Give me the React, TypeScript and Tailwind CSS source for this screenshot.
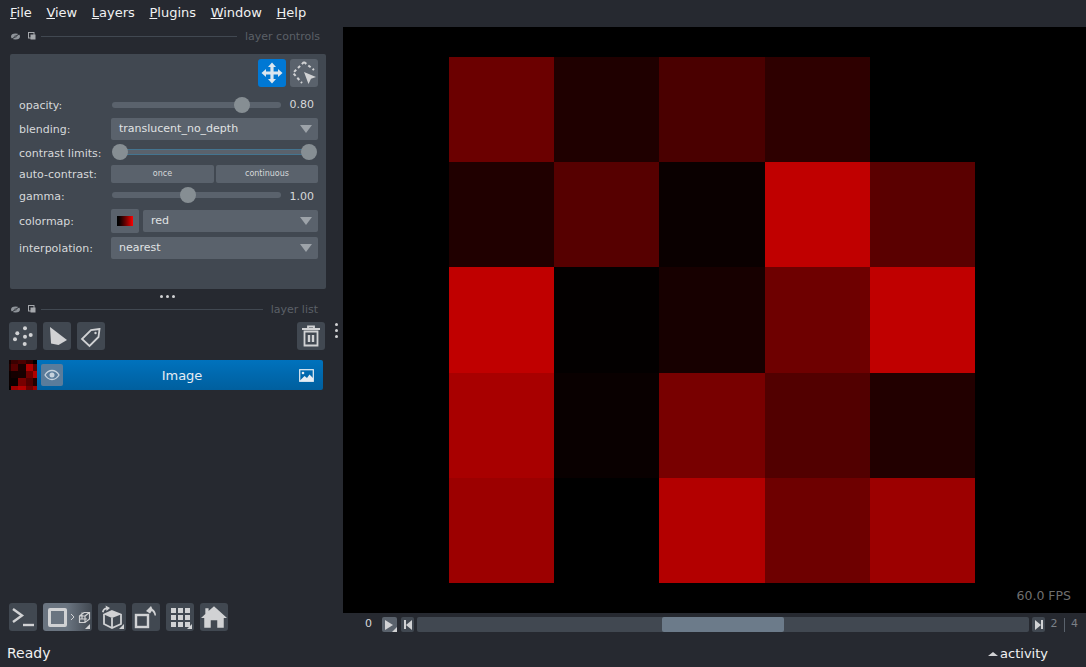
import type { ReactNode } from "react"

const menus = [
  ["F", "ile"],
  ["V", "iew"],
  ["L", "ayers"],
  ["P", "lugins"],
  ["W", "indow"],
  ["H", "elp"],
]

const cells = [
  "#6b0000", "#1f0000", "#4a0000", "#2e0000", "#000000",
  "#200000", "#560000", "#0a0000", "#c00000", "#5a0000",
  "#c00000", "#030000", "#170000", "#6e0000", "#c00000",
  "#a80000", "#090000", "#780000", "#520000", "#220000",
  "#9c0000", "#000000", "#b30000", "#6e0000", "#9c0000",
]

const thumb = [
  "#100000", "#3a0000", "#4a0000", "#2e0000", "#000000",
  "#200000", "#560000", "#1a0000", "#b00000", "#5a0000",
  "#0a0000", "#140000", "#170000", "#6e0000", "#b00000",
  "#0a0000", "#090000", "#780000", "#520000", "#220000",
  "#000000", "#9c0000", "#b30000", "#6e0000", "#9c0000",
]

function Corner() {
  return <span className="absolute right-[2px] bottom-[2px] h-0 w-0 border-b-[5px] border-l-[5px] border-b-[#d1d2d4] border-l-transparent" />
}

function IconBtn({ children, bg = "bg-[#414851]", className = "" }: { children: ReactNode; bg?: string; className?: string }) {
  return (
    <div className={`relative flex h-7 w-7 shrink-0 items-center justify-center rounded-[3px] ${bg} ${className}`}>
      {children}
    </div>
  )
}

function DockHeader({ title, right }: { title: string; right: string }) {
  return (
    <div className={`flex h-[18px] items-center pl-[11px] ${right}`}>
      <svg width="9" height="7" viewBox="0 0 9 7" className="mr-[8px] shrink-0">
        <ellipse cx="4.5" cy="3.5" rx="4.5" ry="3" fill="#8f949a" />
        <path d="M1 6 8 1" stroke="#262930" strokeWidth="1" />
        <circle cx="4.5" cy="3.5" r="1.2" fill="#55595f" />
      </svg>
      <svg width="8" height="8" viewBox="0 0 8 8" className="mr-[5px] shrink-0">
        <rect x="0.5" y="0.5" width="5.5" height="5.5" fill="none" stroke="#a5a8ac" />
        <rect x="2.5" y="2.5" width="5" height="5" fill="#a5a8ac" />
      </svg>
      <div className="h-px flex-1 bg-[#414851]" />
      <span className="ml-[8px] text-[11px] leading-none text-[#5b6067]">{title}</span>
    </div>
  )
}

function Slider({ pos, value, valueClass }: { pos: number; value: string; valueClass: string }) {
  return (
    <div className="flex h-full flex-1 items-center">
      <div className="relative ml-[1px] h-[6px] w-[169px] rounded-[3px] bg-[#5a626c]">
        <div className="absolute top-[-5px] h-4 w-4 rounded-full bg-[#868e93]" style={{ left: pos - 8 }} />
      </div>
      <span className={`ml-auto pr-[4px] text-[11px] text-[#d6d8da] ${valueClass}`}>{value}</span>
    </div>
  )
}

function Select({ text, className = "" }: { text: string; className?: string }) {
  return (
    <div className={`flex items-center justify-between rounded-[2px] bg-[#5a626c] pl-2 pr-[6px] text-[11px] text-[#e0e2e4] ${className}`}>
      <span>{text}</span>
      <span className="h-0 w-0 border-x-[6.5px] border-t-[8px] border-x-transparent border-t-[#9da3a9]" />
    </div>
  )
}

function Row({ label, className, labelClass, children }: { label: string; className: string; labelClass: string; children: ReactNode }) {
  return (
    <div className={`flex items-center ${className}`}>
      <span className={`w-[92px] shrink-0 text-[11px] text-[#d6d8da] ${labelClass}`}>{label}</span>
      <div className="flex h-full min-w-0 flex-1 items-center">{children}</div>
    </div>
  )
}

function LayerControls() {
  return (
    <div className="ml-[10px] mt-[9px] h-[235px] w-[316px] rounded-[2px] bg-[#414851] pl-[9px] pr-[8px] pt-[5px]">
      <div className="flex justify-end gap-1">
        <IconBtn bg="bg-[#0078d4]">
          <svg width="24" height="24" viewBox="0 0 24 24" fill="#dbe6ef">
            <path d="M12 1.5 16 6h-2.400v4.400H18V8l4.500 4-4.500 4v-2.400h-4.400v4.400H16l-4 4.500L8 18h2.400v-4.400H6V16l-4.500-4L6 8v2.400h4.400V6H8z" />
          </svg>
        </IconBtn>
        <IconBtn bg="bg-[#5a626c]">
          <svg width="28" height="28" viewBox="0 0 28 28" fill="none">
            <path d="M14 3 24 11M14 3 3 14 12 24" stroke="#d1d2d4" strokeWidth="2" strokeDasharray="3 2.500" />
            <path d="M14 13 26 18l-5 1.800L18.500 25z" fill="#d1d2d4" />
          </svg>
        </IconBtn>
      </div>
      <Row label="opacity:" labelClass="pt-[4px]" className="mt-[4px] h-[27px]">
        <Slider pos={130} value="0.80" valueClass="pt-[2px]" />
      </Row>
      <Row label="blending:" labelClass="pt-[2px]" className="h-[22px]">
        <Select text="translucent_no_depth" className="h-[22px] w-full" />
      </Row>
      <Row label="contrast limits:" labelClass="pt-[5px]" className="h-[24px]">
        <div className="relative ml-[9px] h-[6px] w-[189px] border-y border-[#44748f] bg-[#5a626c]">
          <div className="absolute left-[-8px] top-[-6px] h-4 w-4 rounded-full bg-[#868e93]" />
          <div className="absolute right-[-8px] top-[-6px] h-4 w-4 rounded-full bg-[#868e93]" />
        </div>
      </Row>
      <Row label="auto-contrast:" labelClass="pt-[2px]" className="mt-px h-[18px]">
        <div className="flex h-full w-full gap-[2px] text-center text-[8px] leading-[18px] text-[#d6d8da]">
          <div className="w-[103px] rounded-[2px] bg-[#5a626c]">once</div>
          <div className="flex-1 rounded-[2px] bg-[#5a626c]">continuous</div>
        </div>
      </Row>
      <Row label="gamma:" labelClass="pt-[5px]" className="mt-[1px] h-[22px]">
        <Slider pos={76} value="1.00" valueClass="pt-[4px]" />
      </Row>
      <Row label="colormap:" labelClass="pt-[3px]" className="mt-[3px] h-[24px]">
        <div className="flex h-[24px] w-[28px] shrink-0 items-center justify-center rounded-[2px] bg-[#5a626c]">
          <div className="h-[10px] w-[16px] bg-gradient-to-r from-black to-[#ff0000]" />
        </div>
        <Select text="red" className="ml-1 h-[22px] flex-1" />
      </Row>
      <Row label="interpolation:" labelClass="pt-[3px]" className="mt-[4px] h-[22px]">
        <Select text="nearest" className="h-[22px] w-full" />
      </Row>
    </div>
  )
}

function LayerList() {
  return (
    <>
      <div className="flex h-[11px] items-center justify-center gap-[3px] pr-[9px] pt-[3px]">
        <span className="h-[3px] w-[3px] rounded-full bg-[#d1d2d4]" />
        <span className="h-[3px] w-[3px] rounded-full bg-[#d1d2d4]" />
        <span className="h-[3px] w-[3px] rounded-full bg-[#d1d2d4]" />
      </div>
      <DockHeader title="layer list" right="pr-[25px]" />
      <div className="mt-[4px] flex items-center pl-[9px] pr-[18px]">
        <div className="flex gap-[6px]">
          <IconBtn>
            <svg width="28" height="28" viewBox="0 0 28 28" fill="#d1d2d4">
              <circle cx="8.300" cy="11.300" r="2" />
              <circle cx="16" cy="6.300" r="2" />
              <circle cx="16" cy="14.700" r="2" />
              <circle cx="21.700" cy="13" r="2" />
              <circle cx="6" cy="17.300" r="2" />
              <circle cx="15.700" cy="22" r="2" />
            </svg>
          </IconBtn>
          <IconBtn>
            <svg width="28" height="28" viewBox="0 0 28 28" fill="#d1d2d4">
              <path d="M7 5 24 18 15.500 23 8 21.500z" />
            </svg>
          </IconBtn>
          <IconBtn>
            <svg width="28" height="28" viewBox="0 0 28 28" fill="none" stroke="#d1d2d4" strokeWidth="1.800">
              <path d="M22.500 7 14 8 5 17l7.500 7 9-9z" />
              <circle cx="18.500" cy="11" r="1.200" fill="#d1d2d4" stroke="none" />
            </svg>
          </IconBtn>
        </div>
        <IconBtn className="ml-auto">
          <svg width="20" height="22" viewBox="0 0 20 22" fill="none" stroke="#d1d2d4" strokeWidth="1.800">
            <path d="M1 4h18" strokeWidth="2" />
            <path d="M7 3V1.500h6V3" />
            <path d="M3.500 6.500v14h13v-14z" />
            <path d="M8 10v7M12 10v7" strokeWidth="2.400" />
          </svg>
          <span className="absolute right-[-13px] top-[1px] flex flex-col gap-[3px]">
            <span className="h-[3px] w-[3px] rounded-full bg-[#d1d2d4]" />
            <span className="h-[3px] w-[3px] rounded-full bg-[#d1d2d4]" />
            <span className="h-[3px] w-[3px] rounded-full bg-[#d1d2d4]" />
          </span>
        </IconBtn>
      </div>
      <div className="ml-[9px] mt-[10px] flex h-[30px] w-[314px] items-center rounded-[2px] bg-gradient-to-b from-[#0072bd] to-[#005f9e]">
        <div className="grid h-[30px] w-[28px] shrink-0 grid-cols-[2px_7px_8px_7px_4px] grid-rows-[4px_7px_7px_8px_4px]">
          {thumb.map((c, i) => (
            <div key={i} style={{ backgroundColor: c }} />
          ))}
        </div>
        <div className="ml-[4px] flex h-[22px] w-[22px] shrink-0 items-center justify-center rounded-[2px] bg-[#5a7c9b]">
          <svg width="16" height="12" viewBox="0 0 16 12" fill="none">
            <path d="M1 6c3.500-6 10.500-6 14 0-3.500 6-10.500 6-14 0z" stroke="#c7d3de" strokeWidth="1.300" />
            <circle cx="8" cy="6" r="2.500" fill="#c7d3de" />
          </svg>
        </div>
        <span className="flex-1 pl-[2px] pt-[2px] text-center text-[13px] text-[#e6edf3]">Image</span>
        <svg width="15" height="13" viewBox="0 0 15 13" className="mr-[9px] shrink-0" fill="none">
          <rect x="0.700" y="0.700" width="13.600" height="11.600" stroke="#e6edf3" strokeWidth="1.200" />
          <circle cx="4" cy="4" r="1.300" fill="#e6edf3" />
          <path d="M1 11.500 5.500 7 8 9l2.500-3.500L14 9v3H1z" fill="#e6edf3" />
        </svg>
      </div>
    </>
  )
}

function BottomButtons() {
  return (
    <div className="mt-auto flex gap-[6px] pb-px pl-[9px]">
      <IconBtn>
        <svg width="24" height="22" viewBox="0 0 24 22" fill="none" stroke="#d1d2d4" strokeWidth="2.400">
          <path d="M2 3l9 6.500L2 16" />
          <path d="M12 19h11" />
        </svg>
      </IconBtn>
      <div className="relative flex h-7 w-[49px] shrink-0 items-center rounded-[3px] bg-gradient-to-r from-[#6a7480] from-50% to-[#414851] pl-[5px]">
        <div className="h-[19px] w-[19px] rounded-[2px] border-[3px] border-[#d1d2d4] bg-[#6a7480]" />
        <svg width="6" height="8" viewBox="0 0 6 8" className="ml-[3px]" fill="none" stroke="#d1d2d4" strokeWidth="1">
          <path d="M1 1l3 3-3 3" />
        </svg>
        <svg width="13" height="13" viewBox="0 0 13 13" className="ml-[2px]" fill="none" stroke="#d1d2d4" strokeWidth="1.200">
          <path d="M1.500 5 6 1.500h5.500V8L7 11.500H1.500zM1.500 5H7v6.500M7 5l4.500-3.500M4 1.500v7M1.500 8H9" />
        </svg>
        <Corner />
      </div>
      <IconBtn>
        <svg width="26" height="26" viewBox="0 0 26 26" fill="none">
          <path d="M13 7 22 10.500V20L13 24 5 20V10.500z" stroke="#d1d2d4" strokeWidth="1.800" />
          <path d="M5 10.500 13 14l9-3.500L13 7z" fill="#d1d2d4" />
          <path d="M13 14v10" stroke="#d1d2d4" strokeWidth="1.800" />
          <path d="M3 8c.5-2.500 2-4 4-4.500L6.500 1.500 11 4 7.500 7 7.300 5.200C5.800 5.600 5 6.500 4.700 8.500z" fill="#d1d2d4" />
        </svg>
        <Corner />
      </IconBtn>
      <IconBtn>
        <svg width="26" height="26" viewBox="0 0 26 26" fill="none">
          <rect x="3" y="11" width="12" height="12" stroke="#d1d2d4" strokeWidth="2.400" />
          <path d="M13 7 18 2l1.500 3c2 1.200 3.500 3.500 3.500 6.500h-1.500c-.3-2-1.200-3.500-2.700-4.500L17 9.500z" fill="#d1d2d4" />
        </svg>
      </IconBtn>
      <IconBtn>
        <div className="grid grid-cols-3 gap-[2px]">
          {[0, 1, 2, 3, 4, 5, 6, 7, 8].map((i) => (
            <div key={i} className="h-[5px] w-[5px] bg-[#d1d2d4]" />
          ))}
        </div>
        <Corner />
      </IconBtn>
      <IconBtn>
        <svg width="26" height="24" viewBox="0 0 24 22" fill="#d1d2d4">
          <path d="M12 1 24 12h-3v9h-6v-7H9v7H3v-9H0l4-3.700V3h3v2.500z" />
        </svg>
      </IconBtn>
    </div>
  )
}

function DimsBar() {
  return (
    <div className="flex h-[19px] items-center pt-[4px] text-[11px]">
      <span className="ml-[22px] w-[17px] text-[#d6d8da]">0</span>
      <div className="relative flex h-[15px] w-[15px] items-center justify-center rounded-[2px] bg-[#5a626c]">
        <span className="ml-[-1px] h-0 w-0 border-y-[5px] border-l-[8px] border-y-transparent border-l-[#d1d2d4]" />
        <span className="absolute bottom-0 right-0 h-0 w-0 border-b-[5px] border-l-[5px] border-b-[#d1d2d4] border-l-transparent" />
      </div>
      <div className="ml-[4px] flex h-[15px] w-[13px] items-center justify-center rounded-[2px] bg-[#414851]">
        <span className="h-[9px] w-[2px] bg-[#d1d2d4]" />
        <span className="h-0 w-0 border-y-[5px] border-r-[6px] border-y-transparent border-r-[#d1d2d4]" />
      </div>
      <div className="ml-[3px] flex h-[15px] w-[612px] rounded-[2px] bg-[#414851] pl-[245px]">
        <div className="h-full w-[122px] rounded-[2px] bg-[#6c7b8a]" />
      </div>
      <div className="ml-[3px] flex h-[15px] w-[13px] items-center justify-center rounded-[2px] bg-[#414851]">
        <span className="h-0 w-0 border-y-[5px] border-l-[6px] border-y-transparent border-l-[#d1d2d4]" />
        <span className="h-[9px] w-[2px] bg-[#d1d2d4]" />
      </div>
      <span className="ml-[4px] mr-[5px] w-[10px] text-center text-[#7b8087]">2</span>
      <span className="h-[14px] w-px bg-[#5a626c]" />
      <span className="ml-[6px] text-[#7b8087]">4</span>
    </div>
  )
}

export default function App() {
  return (
    <div className="flex h-[667px] w-[1086px] flex-col overflow-hidden bg-[#262930] font-['DejaVu_Sans',sans-serif] text-[#f0f1f2]">
      <div className="flex h-[27px] items-center gap-[14.600px] pb-[2px] pl-[10px] text-[13px]">
        {menus.map(([first, rest]) => (
          <span key={first}>
            <span className="underline">{first}</span>
            {rest}
          </span>
        ))}
      </div>
      <div className="flex h-[605px]">
        <div className="flex w-[343px] shrink-0 flex-col">
          <DockHeader title="layer controls" right="pr-[23px]" />
          <LayerControls />
          <LayerList />
          <BottomButtons />
        </div>
        <div className="flex min-w-0 flex-1 flex-col">
          <div className="relative h-[586px] bg-black px-[106px] pb-[30px] pt-[30px]">
            <div className="grid h-[526px] w-[526px] grid-cols-5 grid-rows-5">
              {cells.map((c, i) => (
                <div key={i} style={{ backgroundColor: c }} />
              ))}
            </div>
            <span className="absolute bottom-[8px] right-[15px] text-[12.500px] leading-[18px] text-[#6f6f6f]">60.0 FPS</span>
          </div>
          <DimsBar />
        </div>
      </div>
      <div className="flex h-[35px] items-center justify-between pl-[7px] pr-[38px] pt-[7px] text-[14px]">
        <span>Ready</span>
        <span className="flex items-center pt-px text-[13px]">
          <span className="mr-[2px] h-0 w-0 border-x-[5px] border-b-[4px] border-x-transparent border-b-[#d1d2d4]" />
          activity
        </span>
      </div>
    </div>
  )
}
